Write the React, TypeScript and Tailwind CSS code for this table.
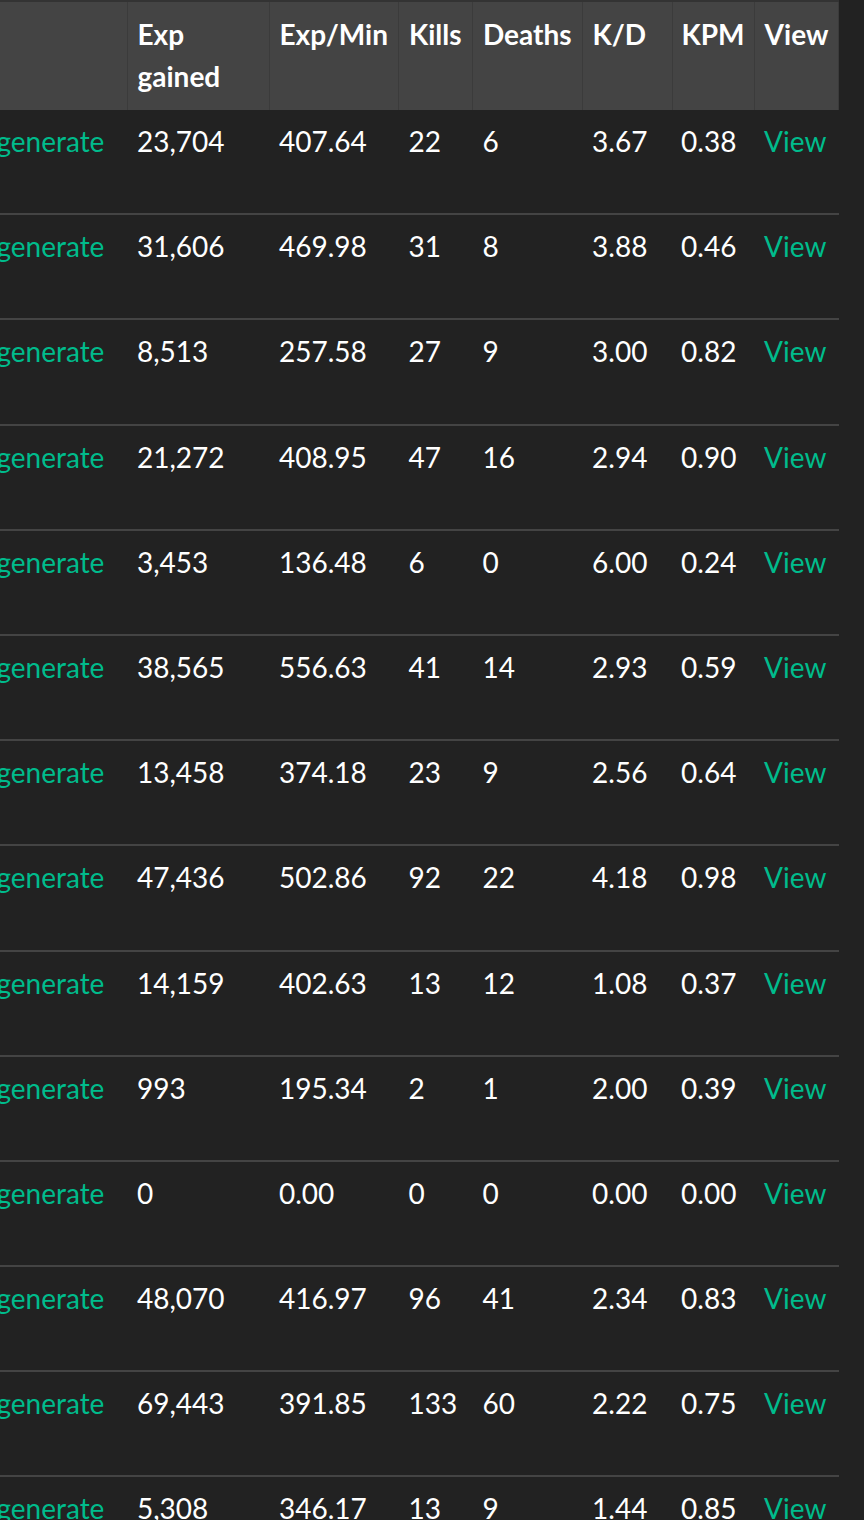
import { useLayoutEffect, useRef } from 'react';

const rows = [
  ['23,704', '407.64', '22', '6', '3.67', '0.38'],
  ['31,606', '469.98', '31', '8', '3.88', '0.46'],
  ['8,513', '257.58', '27', '9', '3.00', '0.82'],
  ['21,272', '408.95', '47', '16', '2.94', '0.90'],
  ['3,453', '136.48', '6', '0', '6.00', '0.24'],
  ['38,565', '556.63', '41', '14', '2.93', '0.59'],
  ['13,458', '374.18', '23', '9', '2.56', '0.64'],
  ['47,436', '502.86', '92', '22', '4.18', '0.98'],
  ['14,159', '402.63', '13', '12', '1.08', '0.37'],
  ['993', '195.34', '2', '1', '2.00', '0.39'],
  ['0', '0.00', '0', '0', '0.00', '0.00'],
  ['48,070', '416.97', '96', '41', '2.34', '0.83'],
  ['69,443', '391.85', '133', '60', '2.22', '0.75'],
  ['5,308', '346.17', '13', '9', '1.44', '0.85'],
];

export default function App() {
  const scroller = useRef<HTMLDivElement>(null);

  // the table is shown scrolled sideways, first column half out of view
  useLayoutEffect(() => {
    if (scroller.current) scroller.current.scrollLeft = 45;
  }, []);

  return (
    <div className="h-screen overflow-hidden bg-[#222] text-white font-['Lato','Liberation_Sans',sans-serif]">
      <div ref={scroller} className="overflow-hidden">
        <div className="w-max pr-[26px]">
          <table className="table-fixed border-collapse text-[28px] leading-[42px]">
            <colgroup>
              <col className="w-[172px]" />
              <col className="w-[142px]" />
              <col className="w-[129px]" />
              <col className="w-[74px]" />
              <col className="w-[109px]" />
              <col className="w-[90px]" />
              <col className="w-[82px]" />
              <col className="w-[83px]" />
            </colgroup>
            <thead>
              <tr className="bg-[#444] border-t-2 border-[#333]">
                <th className="px-[10px] pt-[11px] pb-[13px] text-left font-bold align-top border-r border-[#3b3b3b]"></th>
                <th className="px-[10px] pt-[11px] pb-[13px] text-left font-bold align-top border-r border-[#3b3b3b]">
                  Exp gained
                </th>
                <th className="px-[10px] pt-[11px] pb-[13px] text-left font-bold align-top border-r border-[#3b3b3b]">
                  Exp/Min
                </th>
                <th className="px-[10px] pt-[11px] pb-[13px] text-left font-bold align-top border-r border-[#3b3b3b]">
                  Kills
                </th>
                <th className="px-[10px] pt-[11px] pb-[13px] text-left font-bold align-top border-r border-[#3b3b3b]">
                  Deaths
                </th>
                <th className="px-[10px] pt-[11px] pb-[13px] text-left font-bold align-top border-r border-[#3b3b3b]">
                  K/D
                </th>
                <th className="px-[9px] pt-[11px] pb-[13px] text-left font-bold align-top border-r border-[#3b3b3b]">
                  KPM
                </th>
                <th className="px-[10px] pt-[11px] pb-[13px] text-left font-bold align-top border-r border-[#3b3b3b]">
                  View
                </th>
              </tr>
            </thead>
            <tbody>
              {rows.map((r, i) => (
                <tr key={i} className="border-b-2 border-[#444]">
                  <td className="px-[10px] pt-[10px] align-top whitespace-nowrap">
                    <div className="h-[93.2px]">
                      <a className="text-[#00bc8c]">Regenerate</a>
                    </div>
                  </td>
                  <td className="px-[10px] pt-[10px] align-top">{r[0]}</td>
                  <td className="px-[10px] pt-[10px] align-top">{r[1]}</td>
                  <td className="px-[10px] pt-[10px] align-top">{r[2]}</td>
                  <td className="px-[10px] pt-[10px] align-top">{r[3]}</td>
                  <td className="px-[10px] pt-[10px] align-top">{r[4]}</td>
                  <td className="px-[9px] pt-[10px] align-top">{r[5]}</td>
                  <td className="px-[10px] pt-[10px] align-top">
                    <a className="text-[#00bc8c]">View</a>
                  </td>
                </tr>
              ))}
            </tbody>
          </table>
        </div>
      </div>
    </div>
  );
}
